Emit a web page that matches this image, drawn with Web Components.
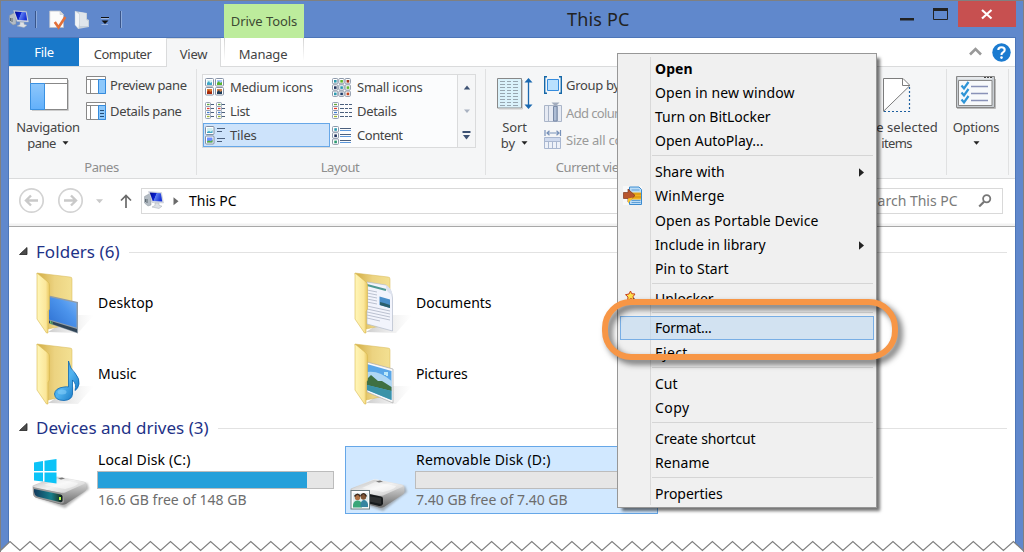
<!DOCTYPE html>
<html lang="en">
<head>
<meta charset="utf-8">
<title>This PC</title>
<style>
html,body{margin:0;padding:0;width:1024px;height:552px;overflow:hidden;background:#fff}
body{font-family:"Noto Sans","Open Sans",sans-serif;font-size:14px;color:#000}
</style>
</head>
<body>
<explorer-window></explorer-window>
<script>
const labels = new Set();

// Single line of text; the "w" attribute gives the width it should occupy.
class TextLabel extends HTMLElement {
  constructor() {
    super();
    this.attachShadow({mode: 'open'}).innerHTML =
      '<style>:host{display:inline-block;white-space:nowrap;line-height:20px;height:20px;flex:none}</style><slot></slot>';
  }
  connectedCallback() { labels.add(this); this.fit(); }
  fit() {
    const w = +this.getAttribute('w');
    if (!w) return;
    this.style.letterSpacing = '0px';
    const n = this.textContent.length;
    const natural = this.getBoundingClientRect().width;
    this.style.letterSpacing = ((w + .6 - natural) / n).toFixed(3) + 'px';
  }
}
customElements.define('text-label', TextLabel);

const folder = (inner, h = 64) => `<svg width="66" height="${h}" viewBox="0 0 66 64">
<defs><linearGradient id="f" x1="0" x2="1"><stop offset="0" stop-color="#fff6b8"/><stop offset=".7" stop-color="#fbe79b"/><stop offset="1" stop-color="#e8c75f"/></linearGradient>
<linearGradient id="b" x1="0" x2="1"><stop offset="0" stop-color="#d2ad45"/><stop offset=".5" stop-color="#ecd381"/><stop offset="1" stop-color="#f3e092"/></linearGradient>
<linearGradient id="s" x1="0" x2="1"><stop offset="0" stop-color="#999" stop-opacity=".5"/><stop offset="1" stop-color="#ccc" stop-opacity="0"/></linearGradient>
<linearGradient id="m" x1="0" y1="1" x2="1" y2="0"><stop offset="0" stop-color="#2d6fd0"/><stop offset=".6" stop-color="#4c94ec"/><stop offset="1" stop-color="#7ab4f6"/></linearGradient>
<linearGradient id="n" x1="0" y1="0" x2="1" y2="1"><stop offset="0" stop-color="#2b9be6"/><stop offset=".5" stop-color="#52b4f0"/><stop offset="1" stop-color="#0868b8"/></linearGradient></defs>
<path d="M11 60L38 43L57 43L41 61Z" fill="url(#s)"/>
<path d="M0 1L33 5Q35 5 35 7V52L11 57Z" fill="url(#b)" stroke="#d7b653" stroke-width=".5"/>${inner}
<path d="M0 1L11 10Q12.5 11.500 12.500 13V37L11 39.500V61L9.500 61L0 47Z" fill="url(#f)" stroke="#d9b851" stroke-width=".6"/></svg>`;

const disk = inner => `<svg width="60" height="62" viewBox="0 0 60 62">
<defs><linearGradient id="t" x1="0" y1="0" x2="1" y2="1"><stop offset="0" stop-color="#b8b8b8"/><stop offset=".5" stop-color="#f2f2f2"/><stop offset="1" stop-color="#c4c4c4"/></linearGradient>
<linearGradient id="r" x1="0" y1="0" x2="0" y2="1"><stop offset="0" stop-color="#f4f4f4"/><stop offset=".5" stop-color="#b0b0b0"/><stop offset="1" stop-color="#6a6a6a"/></linearGradient>
<linearGradient id="g"><stop offset="0" stop-color="#123a5c"/><stop offset=".6" stop-color="#167f8c"/><stop offset=".85" stop-color="#1d4a40"/><stop offset="1" stop-color="#0a1512"/></linearGradient>
<filter id="bl" x="-20%" y="-20%" width="140%" height="150%"><feGaussianBlur stdDeviation="1.200"/></filter></defs>
<path d="M3 50L33 61L57 42L55 36Z" fill="#777" opacity=".55" filter="url(#bl)"/>
<path d="M0.500 40Q0 38.500 2 38L22 30Q24 29 27 29.500L52 34.500Q54.500 35 54.500 37V42Q54 44 52 45L34 57Q32 58 29 57.500L5 51Q1.500 50 1 47Z" fill="url(#r)"/>
<path d="M1.500 39L22 30.500Q24 29.500 27 30L52 35Q54 36 52 37L33 45.500Q31 46 28 45.500L3 41Q1 40 1.500 39Z" fill="url(#t)"/>
<path d="M12 38L25 32L46 36Q46 39 33 42Z" fill="#fff" opacity=".5"/><path d="M26 31.500l4-1 3 1-4 1z" fill="#777"/>${inner}</svg>`;

const icons = {
pc: `<svg width="21" height="19" viewBox="0 0 21 19"><defs><linearGradient id="a" x1="0" x2="1" y1="0" y2=".3"><stop offset="0" stop-color="#000a8c"/><stop offset=".5" stop-color="#0a20d0"/><stop offset=".55" stop-color="#5c7cf0"/><stop offset="1" stop-color="#1a35d8"/></linearGradient></defs><path d="M.5 5.500L5 3L7 4V14L4 15L.5 12Z" fill="#b4bcc4" stroke="#8d979f" stroke-width=".5"/><path d="M1.500 8v3M3 8v4" stroke="#5e6a72"/><path d="M4.500 .5L17.500 1.500L19.500 12L8 11.500Z" fill="#d9dde4" stroke="#aeb6c2" stroke-width=".4"/><path d="M5.700 1.500L16.800 2.200L18.300 10.500L8.700 10Z" fill="url(#a)"/><path d="M11 12l4 .2v2l3 1-3 2.300-7-1.500 3-1.500z" fill="#dde1e6" stroke="#a5acb5" stroke-width=".5"/></svg>`,
check: `<svg width="18" height="20" viewBox="0 0 18 20"><path d="M.7 1H11L14.500 4.500V17.500H.7Z" fill="#fbfbfb" stroke="#b9bec8" stroke-width=".8"/><path d="M11 1V4.500H14.500" fill="#ddd" stroke="#b9bec8" stroke-width=".5"/><path d="M5.800 12L9.500 17.500L16.300 7" fill="none" stroke="#e2703a" stroke-width="2.600"/></svg>`,
newfolder: `<svg width="17" height="20" viewBox="0 0 17 20"><path d="M1 1L13 3V9L15 10V17L4 19Z" fill="#c6d0da"/><path d="M5 2L12 3.300V9.500L14 11V16H6Z" fill="#dfe5eb"/><path d="M1 1L5.500 4V14L4.500 19L1 15Z" fill="#f1f4f7" stroke="#b8c4d0" stroke-width=".4"/></svg>`,
qat: `<svg width="8" height="8" viewBox="0 0 8 8"><path d="M0 .5H8" stroke="#111"/><path d="M0 1.500H8M.5 7.500H7" stroke="#9ab4df"/><path d="M.5 3.500H7.500L4 7Z" fill="#111"/></svg>`,
min: `<svg width="14" height="3"><path d="M0 0H14V2.500H0Z" fill="#222"/></svg>`,
max: `<svg width="16" height="13"><path d="M.5 1V11.500H14.500V1" fill="none" stroke="#222"/><path d="M0 0H15V3H0Z" fill="#222"/></svg>`,
close: `<svg width="12" height="11" viewBox="0 0 12 11"><path d="M1 1L10.500 9.500M10.500 1L1 9.500" stroke="#fff" stroke-width="2.200"/></svg>`,
up2: `<svg width="13" height="9" viewBox="0 0 13 9"><path d="M1 7.500L6.500 2L12 7.500" fill="none" stroke="#999" stroke-width="2.600"/></svg>`,
help: `<svg width="19" height="19" viewBox="0 0 19 19"><circle cx="9.500" cy="9.500" r="9.200" fill="#1b7bd0"/><path d="M6.300 7Q6.300 4.300 9.500 4.300T12.700 7Q12.700 8.300 11 9.300T9.500 12" fill="none" stroke="#fff" stroke-width="2.100"/><circle cx="9.500" cy="14.600" r="1.300" fill="#fff"/></svg>`,
nav: `<svg width="40" height="34" viewBox="0 0 40 34"><path d="M2 32.500H38.500V2" stroke="#ccc" fill="none"/><path d="M.5.5H37.500V31.500H.5Z" fill="#fff" stroke="#888"/><path d="M1 5.500H37" stroke="#888"/><defs><linearGradient id="z" y2="1" x2="0"><stop offset="0" stop-color="#8ec7fb"/><stop offset="1" stop-color="#62b0fb"/></linearGradient></defs><path d="M.5 5.500H14.500V31.500H.5Z" fill="url(#z)" stroke="#3a91e2"/></svg>`,
preview: `<svg width="21" height="18"><path d="M.5.5H19.500V17.500H.5Z" fill="#fff" stroke="#888"/><path d="M1 3.500H19M4.500 4V17" stroke="#888"/><path d="M12.500 3.500H19.500V17.500H12.500Z" fill="#8dc8fb" stroke="#348bdd"/></svg>`,
details: `<svg width="21" height="18"><path d="M.5.5H19.500V17.500H.5Z" fill="#fff" stroke="#888"/><path d="M1 3.500H19M4.500 4V17" stroke="#888"/><path d="M12.500 3.500H19.500V17.500H12.500Z" fill="#8dc8fb" stroke="#348bdd"/><path d="M14 8.500h4M14 11.500h4M14 14.500h4" stroke="#234e78"/></svg>`,
medium: `<svg width="19" height="18">${[[0,0,'#3fa7c8','#d4f2f5'],[10,0,'#57b32e','#a9c7ff'],[0,9,'#a6290c','#d97a31'],[10,9,'#1c3c58','#d2834c']].map(([x,y,c,d])=>`<rect x="${x+.5}" y="${y+.5}" width="8" height="7.500" rx="1" fill="#fff" stroke="#8592a6"/><rect x="${x+2}" y="${y+2}" width="5" height="5" fill="${d}"/><path d="M${x+2} ${y+5}l2-2 1 2 2-1v3h-5z" fill="${c}"/>`).join('')}</svg>`,
small: `<svg width="19" height="19">${['#2c9ab0','#62b82e','#a63216','#1d2f59','#2c9ab0','#62b82e','#2c9ab0','#223e69','#c4431d'].map((c,i)=>{const x=i%3*6.300,y=(i/3|0)*6.300;return `<rect x="${x+.5}" y="${y+.5}" width="5.300" height="5.300" rx="1" fill="#fff" stroke="#8d99aa"/><rect x="${x+2}" y="${y+2}" width="2.600" height="2.600" fill="${c}"/>`}).join('')}</svg>`,
list: `<svg width="20" height="18">${[0,11].map(x=>['#62a83c','#e33a2c','#3d7dd0','#9cb82e'].map((c,i)=>`<rect x="${x+.5}" y="${i*4+.5}" width="5" height="4" rx="1" fill="#fff" stroke="#8794a8" stroke-width=".9"/><path d="M${x+2} ${i*4+2.500}h2.500" stroke="${c}" stroke-width="1.300"/><path d="M${x+6} ${i*4+2.500}h3" stroke="#4a5f7d"/>`).join('')).join('')}</svg>`,
tiles: `<svg width="20" height="19">${[[0,'#3fa7c8','#cfeff2'],[9.500,'#57b32e','#6e8fff']].map(([y,c,d])=>`<rect x=".5" y="${y+.5}" width="8.500" height="8" rx="1" fill="#fff" stroke="#7f8da2"/><rect x="2" y="${y+2}" width="5.500" height="5" fill="${d}"/><path d="M2 ${y+6}l2-1 2 1 1.500-2v3h-5.500z" fill="${c}"/>`).join('')}<path d="M12 2.500h8M12 5.500h5M12 12.500h8M12 15.500h5" stroke="#4a5f7d"/></svg>`,
detailsv: `<svg width="20" height="18">${['#62a83c','#e33a2c','#3d7dd0','#9cb82e'].map((c,i)=>`<rect x=".5" y="${i*4+.5}" width="6" height="4" rx="1" fill="#fff" stroke="#8794a8" stroke-width=".9"/><path d="M2 ${i*4+2.500}h3" stroke="${c}" stroke-width="1.300"/><path d="M8 ${i*4+2.500}h4m1 0h3m1 0h3" stroke="#4a5f7d"/>`).join('')}</svg>`,
content: `<svg width="20" height="19">${['#2c9ab0','#1d2f59','#2c9a70'].map((c,i)=>`<rect x=".5" y="${i*6.200+.5}" width="6" height="5.500" rx="1" fill="#fff" stroke="#8d99aa"/><rect x="2.300" y="${i*6.200+2.200}" width="2.600" height="2.600" fill="${c}"/>`).join('')}<path d="M8 2.500h11M8 8.500h11M8 14.500h11" stroke="#4a5f7d"/><path d="M8 4.500h11M8 10.500h11M8 16.500h11" stroke="#5b97db"/></svg>`,
sup: `<svg width="8" height="5"><path d="M.8 4.500L4 .5L7.200 4.500Z" fill="#3d5273"/></svg>`,
sdn: `<svg width="8" height="5"><path d="M1 .5L4 4L7 .5Z" fill="#a9b2c1"/></svg>`,
smore: `<svg width="9" height="9"><path d="M.5 1H8.500" stroke="#3d5273" stroke-width="2"/><path d="M1 4H8L4.500 8.500Z" fill="#3d5273"/></svg>`,
sort: `<svg width="36" height="32"><path d="M.5.5H24.500V30H.5Z" fill="#daf2fb" stroke="#888"/><path d="M2 31H25.500V2" fill="none" stroke="#ccc"/>${[3.5,6.500,9.5,12.500,15.5,18.500,21.5,24.5,27.500].map(y=>`<path d="M3 ${y}h5m2 0h4m2 0h5" stroke="#97a6b0" stroke-width="1"/>`).join('')}<path d="M31.500 3V28" stroke="#1a68b0" stroke-width="1.300"/><path d="M27.500 4.500L31.500 0L35.500 4.500ZM27.500 26.500L31.500 31L35.500 26.500Z" fill="#1a68b0"/></svg>`,
group: `<svg width="19" height="19"><path d="M3 .7H.7V17.300H3M15 .7H17.300V17.300H15" fill="none" stroke="#1668a8" stroke-width="1.400"/><path d="M3.500 3.500H14.500V14.500H3.500Z" fill="#b9e0fe" stroke="#348bdd"/></svg>`,
addcol: `<svg width="19" height="21"><path d="M.5 3.500H17.500V19.500H.5Z" fill="#e6eaf3" stroke="#aab5c8"/><path d="M4.500 4V19M13.500 4V19" stroke="#aab5c8"/><path d="M9.500 4.500H13V19H9.500Z" fill="#aebdd5" stroke="#798aa7"/><path d="M7.500.5h8l-4 4z" fill="#a1abbd"/></svg>`,
sizecol: `<svg width="19" height="20"><path d="M1 0V6M16.500 0V6M3 3H15M5.500.8L3 3L5.500 5.200M12.500.8L15 3L12.500 5.200" stroke="#7892b9" stroke-width="1.200" fill="none"/><path d="M.5 7.500H16.500V18.500H.5Z" fill="#edf1f8" stroke="#a9b7d0"/><path d="M1 8H16V11H1Z" fill="#cfdaee"/><path d="M1 11.500H16M4.500 11V18M8.500 11V18M12.500 11V18" stroke="#a9b7d0"/></svg>`,
hide: `<svg width="28" height="36"><path d="M.5 33V.5H20.500L26.500 7Z" fill="#fff"/><path d="M.5 33.500V.5H20L26.500 7V8L.8 33M19.500.8V7.500H26.500" fill="none" stroke="#7d7d7d"/><path d="M26.500 9V33.500M1 33.500H27" stroke="#1d5f9f" stroke-width="1.200" stroke-dasharray="2 2"/></svg>`,
options: `<svg width="40" height="34"><path d="M.5.5H38.500V31.500H.5Z" fill="#c9ced3" stroke="#888"/><path d="M1 32.500H39.500V3" fill="none" stroke="#bbb"/><path d="M2.500 4.500H36V29.500H2.500Z" fill="#f7f9fb" stroke="#888"/><path d="M2 1h34v2.500H2z" fill="#e6e9ec"/><path d="M28 1.500h2m1 0h2m1 0h2" stroke="#444"/><path d="M15 10.500H32M15 17.500H32M15 24.500H32" stroke="#8992b8" stroke-width="1.300"/><path d="M5.500 9.500l2.500 3 4.500-6.500M5.500 16.500l2.500 3 4.500-6.500M5.500 23.500l2.500 3 4.500-6.500" stroke="#2d94d6" stroke-width="2.200" fill="none"/></svg>`,
drop: `<svg width="7" height="4"><path d="M.5 .3H6.500L3.500 3.800Z" fill="#222"/></svg>`,
back: `<svg width="26" height="26"><circle cx="12.500" cy="12.500" r="11.700" fill="none" stroke="#d3d3d3" stroke-width="1.700"/><path d="M19 12.500H7.500M12 7.500L7 12.500L12 17.500" fill="none" stroke="#c9c9c9" stroke-width="2.400"/></svg>`,
fwd: `<svg width="26" height="26"><circle cx="12.500" cy="12.500" r="11.700" fill="none" stroke="#d3d3d3" stroke-width="1.700"/><path d="M6 12.500H17.500M13 7.500L18 12.500L13 17.500" fill="none" stroke="#c9c9c9" stroke-width="2.400"/></svg>`,
hist: `<svg width="8" height="5"><path d="M0 .3H7L3.500 4.300Z" fill="#c9c9c9"/></svg>`,
up: `<svg width="12" height="15"><path d="M6 14V2M1 6.500L6 1.500L11 6.500" fill="none" stroke="#6a6a6a" stroke-width="1.700"/></svg>`,
crumb: `<svg width="6" height="9"><path d="M.5 .3V8.300L5.500 4.300Z" fill="#6a6a6a"/></svg>`,
search: `<svg width="14" height="15"><circle cx="8.700" cy="4.800" r="3.600" fill="none" stroke="#777" stroke-width="1.800"/><path d="M6 7.700L1.200 12.500" stroke="#777" stroke-width="2.200"/></svg>`,
fold: `<svg width="9" height="9"><path d="M8 .5V7.500H.5Z" fill="#4c4c4c" stroke="#222" stroke-width=".8"/></svg>`,
arrow: `<svg width="6" height="9"><path d="M0 .3V8.700L5 4.500Z" fill="#222"/></svg>`,
desktop: folder(`<path d="M12 23.500L41 30V61.500L12 51.500Z" fill="#8f9ba7"/><path d="M12 25L39.500 31V55.500L12 47.500Z" fill="url(#m)"/><path d="M12 48.500L40 57V60.500L12 51Z" fill="#2f4456"/><path d="M13.500 49v2.500M15 49.500v3" stroke="#6abf6a"/>`),
music: folder(`<path d="M31.500 18Q33 26 38 30Q43 36 42 41Q41 46 38 47.500Q40 41 35.500 37V51Q35 57 27 57.500Q18 57.500 17.500 51Q18 45 27 44Q30 43.500 31.500 44Z" fill="url(#n)" stroke="#0b67b4" stroke-width=".8"/><ellipse cx="25" cy="49" rx="4.500" ry="2.500" fill="#8fd3fb" opacity=".5"/>`),
docs: folder(`<path d="M12 10L31 13Q37 18 37.500 26V59L12 52Z" fill="#f2f4fc" stroke="#b3bccb" stroke-width=".7"/><path d="M12 13L31 18" stroke="#4f9992" stroke-width="2"/><path d="M12 18l10 2M12 21l10 2M12 24l10 2M12 27l10 2M12 30l10 2M12 34l23 5M12 37l23 5M12 40l23 5M12 43l23 5M12 46l13 3" stroke="#b4bbcb" stroke-width=".9"/><path d="M24.500 24.500L35 27.500V36L24.500 33Z" fill="#4b8fc9"/><path d="M25 30l4 1 6 2v3l-10-3z" fill="#2b5f6d"/><path d="M31 13Q30 20 37.500 23Q37 17 31 13Z" fill="#dde2ee"/>`),
pics: folder(`<path d="M12 19L38 26V60L12 49Z" fill="#fafafa" stroke="#aaa" stroke-width=".7"/><path d="M12 21L36.500 28V57L12 47Z" fill="#5aa7e8"/><path d="M12 29Q24 27 36.500 38V46L12 38Z" fill="#c4e3f6" opacity=".8"/><path d="M12 36l4-4 7 6 4 0 9.500 6V48L12 42Z" fill="#3f7042"/><path d="M12 42L36.500 48V57L12 47Z" fill="#3b93a8"/><path d="M30 29v3m2-3v4" stroke="#dff" stroke-width="1.500"/>`),
local: disk(`<path d="M1 40L29 46Q32 46.500 32 48.500V55Q31 57 28 56.500L4 50.500Q1 49 1 45Z" fill="#999"/><path d="M2 42L28.500 47.500Q30.500 48 30.500 49.500V54Q30 55.500 27.500 55L5 49.500Q2.500 48.500 2 45Z" fill="url(#g)"/><path d="M28 50v3" stroke="#b9ff4a" stroke-width="2"/><path d="M2 15.500L11 14V24H2ZM12.500 13.700L24.500 12V24H12.500ZM2 25.500H11V34.500L2 33.500ZM12.500 25.500H24.500V36.500L12.500 34.800Z" fill="#0cc3f7"/>`),
removable: disk(`<path d="M17 43.500L31 46.500Q33 47 33 48.500V54Q32 56.500 29 56L17 53Z" fill="#171a1c"/><path d="M17 51L31 54V48L17 46Z" fill="#555" opacity=".4"/><rect x="1" y="40.5" width="18.500" height="18.5" fill="#fcfcfc" stroke="#6d7d80"/><path d="M3 43H18V57.5H3Z" fill="#e1eef0"/><circle cx="7.500" cy="47.500" r="2.700" fill="#ae7346"/><circle cx="13.500" cy="47" r="2.700" fill="#805635"/><path d="M4.500 46.500q3-4.500 6 0M11 45.500q3-4 5.500 1" fill="none" stroke="#412b1c" stroke-width="1.600"/><path d="M3 57.5v-3q1-4 4.500-4t4.500 4v3z" fill="#3aa678"/><path d="M10.500 57v-3q1-4 3.500-4t4 4v3z" fill="#3684a0"/>`),
merge: `<svg width="20" height="20"><path d="M0 0H19V19H0Z" fill="#f8f8f8"/><path d="M6.500 1H16L18.500 3.500V18.500H6.500Z" fill="#bbdcf6" stroke="#3b8bd0"/><path d="M8.500 4h8M8.500 14.500h9M8.500 16.500h9" stroke="#5e9fd8"/><path d="M8 6.500h10v7H8z" fill="#f4b41e"/><path d="M8 8h10M8 11h10" stroke="#ce8d15"/><path d="M.5 6.500H5V3L12 9.500L5 16V12.500H.5Z" fill="#b8552d" stroke="#7d351d" stroke-width=".7"/><path d="M5 12.500l5-1-5 6z" fill="#f9c52c"/></svg>`,
unlock: `<svg width="20" height="20"><path d="M7.500 2L8.700 4.700L12 5L10 7.700L11 11L7.700 9.500L4.500 12L5 8L2.500 5.700L6 5Z" fill="#ffe04a" stroke="#c8421c" stroke-width="1"/><path d="M10.500 9.500l5 6" stroke="#444" stroke-width="1.500" stroke-dasharray="3 1"/></svg>`
};
class WinIcon extends HTMLElement {
  constructor() {
    super();
    this.attachShadow({mode: 'open'}).innerHTML =
      `<style>:host{display:inline-flex;flex:none}svg{display:block;overflow:visible}</style>${icons[this.getAttribute('name')] || ''}`;
  }
}
customElements.define('win-icon', WinIcon);

const define = (name, css, html) => customElements.define(name, class extends HTMLElement {
  constructor() {
    super();
    const t = document.createElement('template');
    t.innerHTML = `<style>*{box-sizing:border-box}:host{box-sizing:border-box}${css}</style>${html}`;
    this.attachShadow({mode: 'open'}).append(document.importNode(t.content, true));
  }
});

define('title-bar', `
:host{display:grid;grid-template-columns:215px 80px 1fr 123px;height:37px;padding-left:8px;color:#222}
.quick{display:flex;align-items:flex-start;padding-top:9px}
.bar{width:2px;height:17px;margin-top:1px;background:#39558a;border-right:1px solid #8caadb}
.tool{background:#bdec9c;margin-top:3px;display:flex;justify-content:center;align-items:center;color:#3c4a33;font-size:13px}
.title{padding:6px 0 0 263px;font-size:18px}
.btns{display:flex;align-items:flex-start}
.close{width:58px;height:26px;background:#c75050;display:flex;align-items:center;justify-content:center;margin-left:9px}`,
`<div class="quick"><win-icon name="pc"></win-icon><div class="bar" style="margin-left:5px"></div><win-icon name="check" style="margin-left:12px"></win-icon><win-icon name="newfolder" style="margin-left:7px"></win-icon><win-icon name="qat" style="margin:7px 0 0 10px"></win-icon><div class="bar" style="margin-left:11px"></div></div>
<div class="tool"><text-label w="66">Drive Tools</text-label></div>
<div class="title"><text-label w="62">This PC</text-label></div>
<div class="btns"><win-icon name="min" style="margin-top:17px"></win-icon><win-icon name="max" style="margin:7px 0 0 19px"></win-icon><div class="close"><win-icon name="close"></win-icon></div></div>`);

define('ribbon-tabs', `
:host{display:flex;height:29px;background:#fff;border-bottom:1px solid #dadbdc;font-size:13px;color:#444}
div{display:flex;justify-content:center;padding-top:6px;height:29px}
.file{width:70px;height:28px;background:#1979ca;color:#fff;padding-top:4px}
.view{width:55px;background:#f5f6f7;border:1px solid #dadbdc;border-bottom:0;padding-top:5px}
.manage{width:80px;margin-left:3px;height:22px;border:1px solid;border-width:0 1px;border-image:linear-gradient(#d0d0d0,#fff) 1}
.end{margin-left:auto;gap:10px;padding:5px 4px 0 0}`,
`<div class="file"><text-label w="19">File</text-label></div><div style="width:87px"><text-label w="57">Computer</text-label></div><div class="view"><text-label w="27">View</text-label></div><div class="manage" style="padding-right:2px"><text-label w="48">Manage</text-label></div><div class="end"><win-icon name="up2" style="margin-top:4px"></win-icon><win-icon name="help"></win-icon></div>`);

define('ribbon-group', `
:host{display:flex;flex-direction:column;height:111px;position:relative}
.body{height:90px;display:flex}
.cap{display:flex;justify-content:center;color:#8e8e8e;font-size:13px;padding-right:3px}
:host::after{content:"";position:absolute;right:0;top:2px;bottom:3px;width:1px;background:#e0e1e2}`,
`<div class="body"><slot></slot></div><div class="cap"><slot name="caption"></slot></div>`);

define('gallery-item', `
:host{display:flex;align-items:center;height:24px;width:127px;border:1px solid transparent;padding-left:1px}
:host([selected]){background:#cde3fb;border-color:#66a7e8}
.i{width:25px;display:flex}`,
`<span class="i"><slot name="icon"></slot></span><slot></slot>`);

define('ribbon-bar', `
:host{display:flex;height:112px;background:#f5f6f7;border-bottom:1px solid #dadbdc;font-size:13px;color:#444;overflow:hidden}
.big{display:flex;flex-direction:column;align-items:center;flex:none}
.two{display:flex;align-items:center;gap:6px;height:16px}
.col{display:flex;flex-direction:column;flex:none}
.row{display:flex;gap:3px;align-items:center}
.gal{display:flex;border:1px solid #dadbdc;margin:7px 0 0 5px;width:274px;height:74px;background:#fbfcfd}
.gal>.col{width:127px}.scroll{border-left:1px solid #dadbdc;width:19px;margin-left:auto;background:#f5f6f7;display:flex;flex-direction:column;align-items:center}
.scroll span{height:24px;display:flex;align-items:center}
.off{color:#9a9a9a}`,
`<ribbon-group style="width:188px">
<div class="big" style="width:77px;padding:11px 0 0 1px"><win-icon name="nav" style="margin-left:3px"></win-icon><text-label w="63" style="margin-top:5px">Navigation</text-label><div class="two" style="margin-top:-2px"><text-label w="28">pane</text-label><win-icon name="drop"></win-icon></div></div>
<div class="col" style="padding-top:8px;gap:6px"><div class="row"><win-icon name="preview"></win-icon><text-label w="76">Preview pane</text-label></div><div class="row"><win-icon name="details"></win-icon><text-label w="71">Details pane</text-label></div></div>
<text-label slot="caption" w="34">Panes</text-label></ribbon-group>
<ribbon-group style="width:289px"><div class="gal">
<div class="col"><gallery-item><win-icon slot="icon" name="medium"></win-icon><text-label w="82">Medium icons</text-label></gallery-item><gallery-item><win-icon slot="icon" name="list"></win-icon><text-label w="19">List</text-label></gallery-item><gallery-item selected><win-icon slot="icon" name="tiles"></win-icon><text-label w="26">Tiles</text-label></gallery-item></div>
<div class="col"><gallery-item><win-icon slot="icon" name="small"></win-icon><text-label w="65">Small icons</text-label></gallery-item><gallery-item><win-icon slot="icon" name="detailsv"></win-icon><text-label w="39">Details</text-label></gallery-item><gallery-item><win-icon slot="icon" name="content"></win-icon><text-label w="45">Content</text-label></gallery-item></div>
<div class="scroll"><span><win-icon name="sup"></win-icon></span><span><win-icon name="sdn"></win-icon></span><span><win-icon name="smore"></win-icon></span></div></div>
<text-label slot="caption" w="38">Layout</text-label></ribbon-group>
<ribbon-group style="width:200px">
<div class="big" style="width:57px;padding:11px 0 0 0"><win-icon name="sort"></win-icon><text-label w="24" style="margin-top:7px">Sort</text-label><div class="two" style="margin-top:-2px"><text-label w="14">by</text-label><win-icon name="drop"></win-icon></div></div>
<div class="col" style="padding:8px 0 0 1px;gap:7px"><div class="row"><win-icon name="group"></win-icon><text-label w="53">Group by</text-label></div><div class="row off"><win-icon name="addcol"></win-icon><text-label w="72">Add columns</text-label></div><div class="row off"><win-icon name="sizecol"></win-icon><text-label w="86">Size all column</text-label></div></div>
<text-label slot="caption" w="72" style="margin-left:15px">Current view</text-label></ribbon-group>
<ribbon-group style="width:261px"><div class="big" style="width:102px;margin-left:159px;padding:11px 0 0 1px"><win-icon name="hide"></win-icon><text-label w="82" style="margin-top:3px">Hide selected</text-label><text-label w="30" style="margin-top:-4px">items</text-label></div></ribbon-group>
<ribbon-group style="width:62px"><div class="big" style="width:58px;padding:9px 0 0"><win-icon name="options"></win-icon><text-label w="46" style="margin-top:7px">Options</text-label><win-icon name="drop" style="margin-top:4px"></win-icon></div></ribbon-group>`);

define('address-bar', `
:host{display:flex;height:48px;padding:9px 12px 0 10px;border-bottom:1px solid #a8a8a8;background:linear-gradient(#fff 44px,#f2f2f2 45px)}
.box{height:26px;border:1px solid #d9d9d9;display:flex;align-items:center;background:#fff}`,
`<win-icon name="back"></win-icon><win-icon name="fwd" style="margin-left:13px"></win-icon><win-icon name="hist" style="margin:11px 0 0 12px"></win-icon><win-icon name="up" style="margin:6px 0 0 16px"></win-icon>
<div class="box" style="margin-left:9px;width:700px;padding-left:2px"><win-icon name="pc" style="margin-top:-1px"></win-icon><win-icon name="crumb" style="margin-left:8px"></win-icon><text-label w="47" style="margin-left:10px">This PC</text-label></div>
<div class="box" style="margin-left:9px;flex:1;padding-left:11px;color:#7a7a7a"><text-label w="95">Search This PC</text-label><win-icon name="search" style="margin-left:20px"></win-icon></div>`);

define('section-head', `
:host{display:flex;align-items:center;height:24px;font-size:17px;color:#1e3287;padding:0 8px 0 10px}
.line{flex:1;height:1px;background:#e2e2e2;margin:1px 0 0 9px}`,
`<win-icon name="fold" style="margin:-2px 8px 0 0"></win-icon><slot></slot><div class="line"></div>`);

define('file-tile', `
:host{display:flex;width:313px;height:68px;border:1px solid transparent}
:host([selected]){background:#d1e8ff;border-color:#66a7e8}
.i{width:61px;flex:none;margin-left:9px;display:flex}
:host([drive]) .i{width:66px;margin-left:4px}
.t{display:flex;flex-direction:column;justify-content:center;align-items:flex-start;flex:1}
.bar{display:none;width:237px;height:18px;border:1px solid #bcbcbc;background:#e6e6e6;margin:1px 0 1px -1px}
.bar i{display:block;height:100%;width:var(--fill,0);background:#26a0da}
:host([drive]) .bar{display:block}
.s{color:#6d6d6d;display:none}:host([drive]) .s{display:block;height:20px}`,
`<div class="i"><slot name="icon"></slot></div><div class="t"><slot></slot><div class="bar"><i></i></div><div class="s"><slot name="sub"></slot></div></div>`);

define('file-pane', `
:host{display:block;padding-top:13px}
.grid{display:grid;grid-template-columns:313px 313px;gap:3px 5px;margin-left:18px}`,
`<section-head><text-label w="83">Folders (6)</text-label></section-head>
<div class="grid" style="margin-top:5px">
<file-tile><win-icon slot="icon" name="desktop" style="margin-top:2px"></win-icon><text-label w="55">Desktop</text-label></file-tile>
<file-tile><win-icon slot="icon" name="docs" style="margin-top:2px"></win-icon><text-label w="75">Documents</text-label></file-tile>
<file-tile><win-icon slot="icon" name="music" style="margin-top:2px"></win-icon><text-label w="38">Music</text-label></file-tile>
<file-tile><win-icon slot="icon" name="pics" style="margin-top:2px"></win-icon><text-label w="51">Pictures</text-label></file-tile></div>
<section-head style="margin-top:8px"><text-label w="172">Devices and drives (3)</text-label></section-head>
<div class="grid" style="margin-top:6px">
<file-tile drive style="--fill:209px"><win-icon slot="icon" name="local"></win-icon><text-label w="92">Local Disk (C:)</text-label><text-label slot="sub" w="148">16.6 GB free of 148 GB</text-label></file-tile>
<file-tile drive selected><win-icon slot="icon" name="removable" style="margin-top:3px"></win-icon><text-label w="134">Removable Disk (D:)</text-label><text-label slot="sub" w="151">7.40 GB free of 7.40 GB</text-label></file-tile></div>`);

define('menu-item', `
:host{display:flex;align-items:center;height:24px;position:relative;border:1px solid transparent;margin:0 2px}
:host([hot]){border-color:#78aee5;background:rgba(185,215,243,.55)}
.i{width:34px;display:flex;padding-left:2px}.sub{display:none;margin-left:auto;margin-right:8px}:host([more]) .sub{display:flex}`,
`<span class="i"><slot name="icon"></slot></span><slot></slot><win-icon class="sub" name="arrow"></win-icon>`);
define('menu-line', `:host{display:block;height:7px;margin:0 3px 0 34px;padding-top:2px}div{height:1px;background:#d5d5d5}`, `<div></div>`);

define('context-menu', `
:host{display:block;width:260px;height:455px;background:linear-gradient(#d9d9d9,#d9d9d9) 32px 3px/1px 448px no-repeat #f0f0f0;border:1px solid #979797;padding-top:3px;box-shadow:4px 4px 3px -1px rgba(0,0,0,.55)}`,
`<menu-item><text-label w="37" style="font-weight:700">Open</text-label></menu-item>
<menu-item><text-label w="139">Open in new window</text-label></menu-item>
<menu-item><text-label w="115">Turn on BitLocker</text-label></menu-item>
<menu-item><text-label w="108">Open AutoPlay...</text-label></menu-item><menu-line></menu-line>
<menu-item more><text-label w="69">Share with</text-label></menu-item>
<menu-item><win-icon slot="icon" name="merge"></win-icon><text-label w="69">WinMerge</text-label></menu-item>
<menu-item style="height:25px"><text-label w="163">Open as Portable Device</text-label></menu-item>
<menu-item more><text-label w="110">Include in library</text-label></menu-item>
<menu-item><text-label w="73">Pin to Start</text-label></menu-item><menu-line></menu-line>
<menu-item style="height:22px"><win-icon slot="icon" name="unlock"></win-icon><text-label w="58">Unlocker</text-label></menu-item><menu-line style="height:6px"></menu-line>
<menu-item hot><text-label w="56">Format...</text-label></menu-item>
<menu-item style="height:25px"><text-label w="32">Eject</text-label></menu-item><menu-line></menu-line>
<menu-item><text-label w="22">Cut</text-label></menu-item>
<menu-item><text-label w="34">Copy</text-label></menu-item><menu-line></menu-line>
<menu-item><text-label w="100">Create shortcut</text-label></menu-item>
<menu-item><text-label w="54">Rename</text-label></menu-item><menu-line></menu-line>
<menu-item><text-label w="67">Properties</text-label></menu-item>`);

define('call-out', `:host{display:block;width:296px;height:61px;border:6px solid #f79646;border-radius:29px;filter:drop-shadow(4px 4px 3px rgba(0,0,0,.6))}`, ``);

// Torn paper edge along the bottom of the window.
let zig = 'M0 551L10 541.500';
for (let i = 0; i < 50; i++) zig += `L${(20 + i * 20.070).toFixed(1)} 550.500L${(30 + i * 20.070).toFixed(1)} 541.500`;
zig += 'L1023.500 551';
define('torn-edge', `:host{display:block;height:14px}svg{display:block}`,
`<svg width="1024" height="14" viewBox="0 539 1024 14"><path d="${zig}V553H0Z" fill="#fff"/><path d="${zig}" fill="none" stroke="#808080" stroke-width="1.200"/></svg>`);

define('explorer-window', `
:host{display:block;width:1024px;height:552px;position:relative;overflow:hidden;background:#6088cc;border:1px solid #808080;border-bottom:0}
.client{margin:0 8px 0 8px;width:1006px;height:520px;background:#fff;box-shadow:0 0 0 1px #4d76b8}
context-menu{position:absolute;left:616px;top:52px}
call-out{position:absolute;left:601px;top:298px}
torn-edge{position:absolute;left:-1px;top:538px}`,
`<title-bar></title-bar>
<div class="client"><ribbon-tabs></ribbon-tabs><ribbon-bar></ribbon-bar><address-bar></address-bar><file-pane></file-pane></div>
<context-menu></context-menu><call-out></call-out><torn-edge></torn-edge>`);

labels.forEach(l => l.fit());
</script>
</body>
</html>
